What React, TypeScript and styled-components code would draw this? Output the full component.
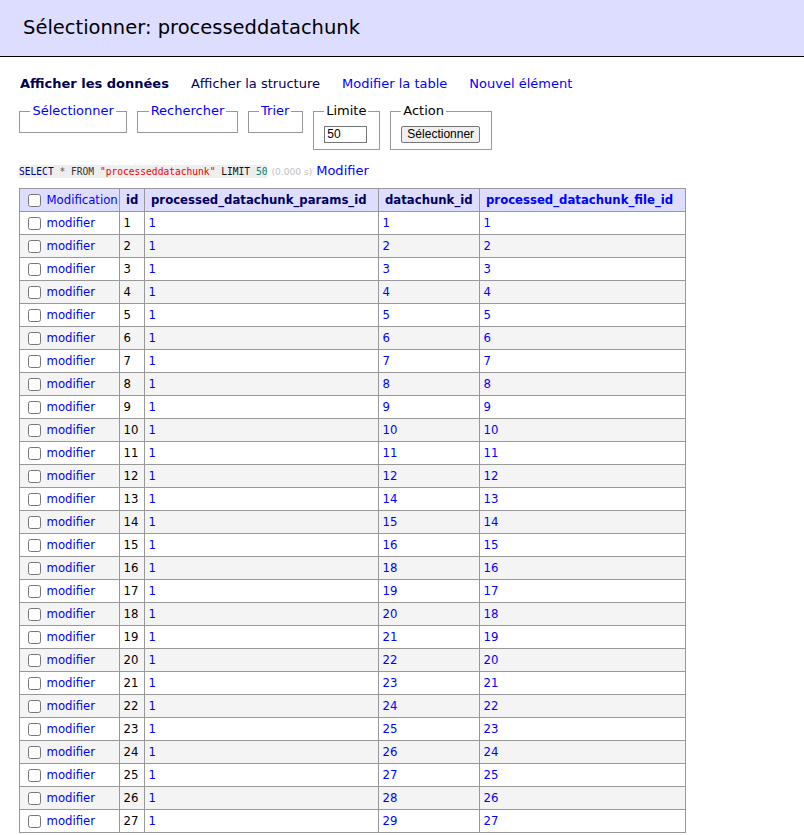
import React from "react";
import styled, { createGlobalStyle } from "styled-components";

// Visible rows of the processeddatachunk table: [id, params_id, datachunk_id, file_id]
const DATACHUNK_IDS = [
  1, 2, 3, 4, 5, 6, 7, 8, 9, 10, 11, 12, 14, 15, 16, 18, 19, 20, 21, 22, 23,
  24, 25, 26, 27, 28, 29,
];

const rows = DATACHUNK_IDS.map((chunk, i) => ({
  id: i + 1,
  params: 1,
  chunk,
  file: i + 1,
}));

const GlobalStyle = createGlobalStyle`
  html, body {
    margin: 0;
    padding: 0;
    background: #fff;
    overflow: hidden;
  }
  body {
    color: #000;
    font: 13px/1.25 "DejaVu Sans", Verdana, sans-serif;
  }
`;

const Page = styled.div`
  display: flex;
  flex-direction: column;
`;

const Title = styled.h2`
  margin: 0;
  padding: 15px 23px 16px;
  height: 25px;
  font-size: 19.5px;
  line-height: 25px;
  font-weight: normal;
  color: #000;
  background: #ddf;
  border-bottom: 1px solid #000;
`;

const Content = styled.div`
  display: flex;
  flex-direction: column;
  align-items: flex-start;
  padding: 19px 0 0 19px;
`;

const Links = styled.nav`
  display: flex;
  gap: 22px;
  padding-left: 1px;
`;

const NavLink = styled.a<{ $kind: "current" | "visited" | "link" }>`
  text-decoration: none;
  white-space: nowrap;
  cursor: pointer;
  font-weight: ${(p) => (p.$kind === "current" ? "bold" : "normal")};
  color: ${(p) =>
    p.$kind === "current" ? "#000050" : p.$kind === "visited" ? "#000060" : "#00f"};
`;

const FilterRow = styled.form`
  display: flex;
  align-items: flex-start;
  gap: 10px;
  margin-top: 11px;
`;

const Fieldset = styled.fieldset`
  margin: 0;
  padding: 6px 10.4px 6.5px;
  border: 1px solid #999;
  min-width: 0;
`;

const Legend = styled.legend<{ $link?: boolean }>`
  padding: 0 2px;
  color: ${(p) => (p.$link ? "#00f" : "#000")};
`;

const LimitInput = styled.input`
  box-sizing: border-box;
  width: 43px;
  height: 17px;
  margin: 0;
  padding: 0 2px;
  border: 1px solid #767676;
  font: 12px "Liberation Sans", Arial, sans-serif;
  color: #000;
  display: block;
`;

const Button = styled.button`
  box-sizing: border-box;
  height: 17px;
  width: 79px;
  margin: 0;
  padding: 0;
  border: 1px solid #767676;
  border-radius: 2px;
  background: #efefef;
  font: 12px/15px "Liberation Sans", Arial, sans-serif;
  color: #000;
  display: block;
`;

const SqlLine = styled.p`
  margin: 13px 0 0;
  display: flex;
  align-items: baseline;
  gap: 4px;
`;

const Code = styled.code`
  font: 9.6px/13px "DejaVu Sans Mono", "Liberation Mono", monospace;
  background: #eee;
  white-space: pre;
`;

const Tok = styled.span<{ $c: string }>`
  color: ${(p) => p.$c};
`;

const Time = styled.span`
  color: silver;
  font-size: 9.1px;
`;

const EditLink = styled.a`
  color: #00f;
  text-decoration: none;
`;

const Table = styled.table`
  margin-top: 9px;
  border-collapse: collapse;
  table-layout: fixed;
  width: 666px;
  font-size: 11.7px;
  line-height: 1.25;
`;

const HeadRow = styled.tr`
  height: 23px;
  background: #ddf;
`;

const Row = styled.tr<{ $odd: boolean }>`
  height: 23px;
  background: ${(p) => (p.$odd ? "#f4f4f4" : "#fff")};
`;

const HeadCell = styled.th<{ $link?: boolean }>`
  border: 1px solid #999;
  padding: 0 6px;
  text-align: left;
  white-space: nowrap;
  overflow: hidden;
  color: ${(p) => (p.$link ? "#00f" : "#000060")};
`;

const Cell = styled.td`
  border: 1px solid #999;
  padding: 0 3.5px;
  white-space: nowrap;
  overflow: hidden;
  vertical-align: middle;
`;

const CheckLabel = styled.label`
  display: flex;
  align-items: center;
  gap: 6px;
`;

const CheckBox = styled.input`
  width: 13px;
  height: 13px;
  margin: 0 0 0 4px;
`;

const CellLink = styled.a`
  color: #00f;
  text-decoration: none;
`;

const HeadText = styled.span`
  color: #00f;
  font-weight: normal;
`;

export default function App() {
  return (
    <Page>
      <GlobalStyle />
      <Title>Sélectionner: processeddatachunk</Title>
      <Content>
        <Links>
          <NavLink $kind="current">Afficher les données</NavLink>
          <NavLink $kind="visited">Afficher la structure</NavLink>
          <NavLink $kind="link">Modifier la table</NavLink>
          <NavLink $kind="link">Nouvel élément</NavLink>
        </Links>

        <FilterRow onSubmit={(e) => e.preventDefault()}>
          <Fieldset>
            <Legend $link>Sélectionner</Legend>
          </Fieldset>
          <Fieldset>
            <Legend $link>Rechercher</Legend>
          </Fieldset>
          <Fieldset>
            <Legend $link>Trier</Legend>
          </Fieldset>
          <Fieldset>
            <Legend>Limite</Legend>
            <LimitInput defaultValue="50" />
          </Fieldset>
          <Fieldset>
            <Legend>Action</Legend>
            <Button type="submit">Sélectionner</Button>
          </Fieldset>
        </FilterRow>

        <SqlLine>
          <Code>
            <Tok $c="#000080">SELECT</Tok> <Tok $c="#555">*</Tok>{" "}
            <Tok $c="#333">FROM</Tok>{" "}
            <Tok $c="#e00">"processeddatachunk"</Tok>{" "}
            <Tok $c="#111">LIMIT</Tok> <Tok $c="#008080">50</Tok>
          </Code>
          <Time>(0.000 s)</Time>
          <EditLink>Modifier</EditLink>
        </SqlLine>

        <Table>
          <colgroup>
            <col style={{ width: 100 }} />
            <col style={{ width: 25 }} />
            <col style={{ width: 234 }} />
            <col style={{ width: 101 }} />
            <col style={{ width: 206 }} />
          </colgroup>
          <thead>
            <HeadRow>
              <Cell>
                <CheckLabel>
                  <CheckBox type="checkbox" />
                  <HeadText>Modification</HeadText>
                </CheckLabel>
              </Cell>
              <HeadCell>id</HeadCell>
              <HeadCell>processed_datachunk_params_id</HeadCell>
              <HeadCell>datachunk_id</HeadCell>
              <HeadCell $link>processed_datachunk_file_id</HeadCell>
            </HeadRow>
          </thead>
          <tbody>
            {rows.map((r, i) => (
              <Row key={r.id} $odd={i % 2 === 1}>
                <Cell>
                  <CheckLabel>
                    <CheckBox type="checkbox" />
                    <CellLink>modifier</CellLink>
                  </CheckLabel>
                </Cell>
                <Cell>{r.id}</Cell>
                <Cell>
                  <CellLink>{r.params}</CellLink>
                </Cell>
                <Cell>
                  <CellLink>{r.chunk}</CellLink>
                </Cell>
                <Cell>
                  <CellLink>{r.file}</CellLink>
                </Cell>
              </Row>
            ))}
          </tbody>
        </Table>
      </Content>
    </Page>
  );
}
